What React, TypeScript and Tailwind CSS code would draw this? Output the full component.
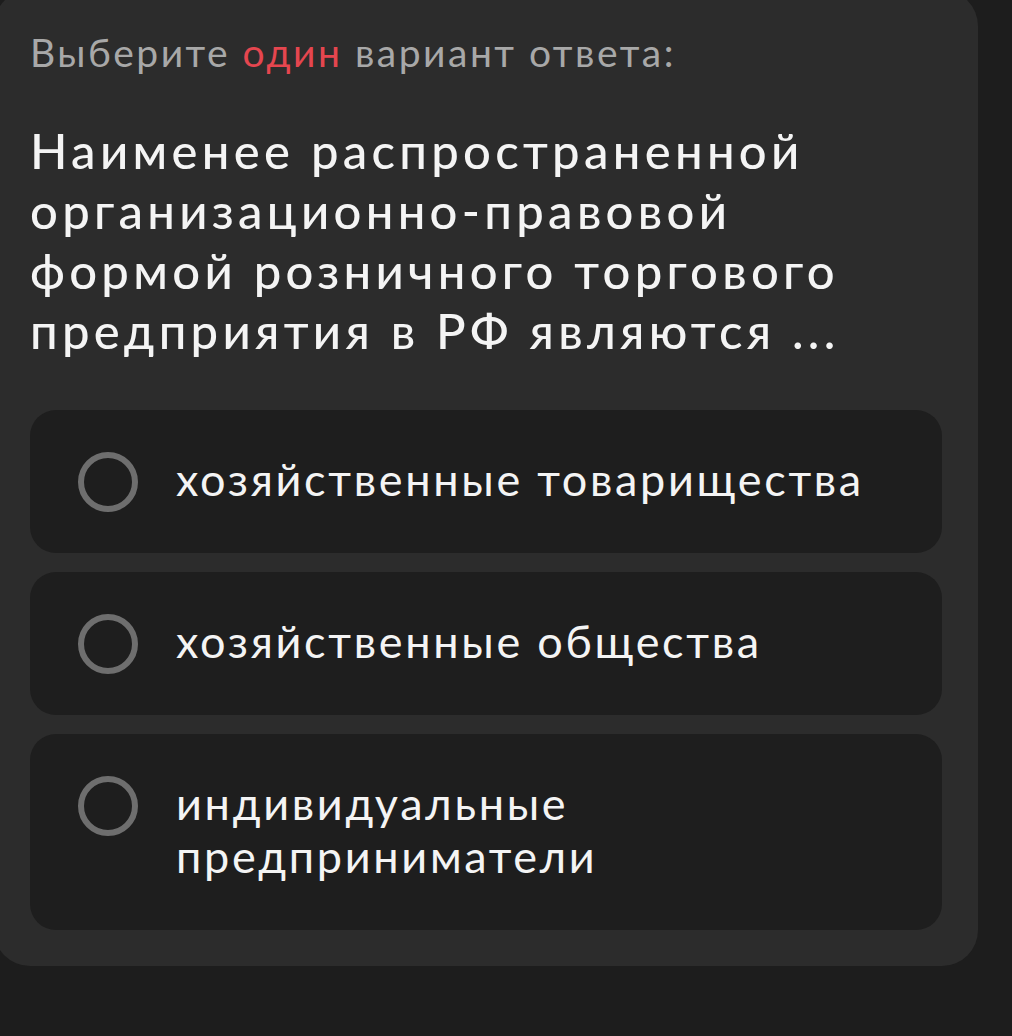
import React from "react";

const options = [
  "хозяйственные товарищества",
  "хозяйственные общества",
  "индивидуальные предприниматели",
];

export default function App() {
  return (
    <div
      className="w-[1012px] h-[1036px] bg-[#1d1d1d] overflow-hidden"
      style={{ fontFamily: "Lato, 'Noto Sans', sans-serif" }}
    >
      <div className="-mt-[10px] -ml-[6px] w-[984px] bg-[#2c2c2c] rounded-[36px] pt-[38px] pb-[36px] px-[36px]">
        <div className="text-[39px] leading-[48px] tracking-[2.5px] text-[#a8a8a8]">
          Выберите <span className="text-[#e5464f]">один</span> вариант ответа:
        </div>
        <div className="mt-[44px] text-[49px] leading-[60px] font-medium tracking-[4.3px] text-[#f4f4f4] pr-[60px]">
          Наименее распространенной организационно-правовой формой розничного торгового предприятия в РФ являются ...
        </div>
        <div className="mt-[50px] flex flex-col gap-[19px]">
          {options.map((o) => (
            <div
              key={o}
              className="bg-[#1e1e1e] rounded-[26px] flex items-start pl-[48px] pr-[40px] pt-[43px] pb-[47px]"
            >
              <div className="mt-[-1px] mb-[-6px] w-[60px] h-[60px] shrink-0 rounded-full border-[6px] border-[#6e6e6e]" />
              <div className="ml-[38px] text-[45px] leading-[53px] tracking-[2.7px] text-[#f4f4f4]">
                {o}
              </div>
            </div>
          ))}
        </div>
      </div>
    </div>
  );
}
